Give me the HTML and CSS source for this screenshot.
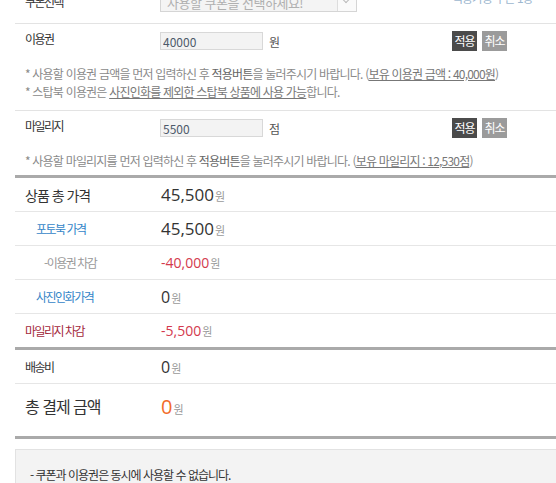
FILE: index.html
```html
<!DOCTYPE html>
<html lang="ko">
<head>
	<meta charset="UTF-8">
	<title>결제 정보</title>
	<link rel="stylesheet" href="styles.css">
</head>
<body>
	<div class="payBox">
		<!-- 쿠폰 -->
		<div class="useBlock">
			<div class="useRow">
				<span class="useTit">쿠폰선택</span>
				<div class="selectBox">
					<span>사용할 쿠폰을 선택하세요!</span>
					<i class="arrow"></i>
				</div>
				<a href="javascript:;" class="couponCnt">적용가능 쿠폰 1장</a>
			</div>
		</div>
		<!-- 이용권 -->
		<div class="useBlock">
			<div class="useRow">
				<span class="useTit">이용권</span>
				<div class="inputWrap"><input type="text" class="txt" value="40000" /><span class="unit">원</span></div>
				<div class="btns"><a href="javascript:;" class="btnApply">적용</a><a href="javascript:;" class="btnCancel">취소</a></div>
			</div>
			<p class="note first">* 사용할 이용권 금액을 먼저 입력하신 후 <b>적용버튼</b>을 눌러주시기 바랍니다. (<u>보유 이용권 금액 : 40,000원</u>)</p>
			<p class="note">* 스탑북 이용권은 <u>사진인화를 제외한 스탑북 상품에 사용 가능</u>합니다.</p>
		</div>
		<!-- 마일리지 -->
		<div class="useBlock last">
			<div class="useRow">
				<span class="useTit">마일리지</span>
				<div class="inputWrap"><input type="text" class="txt" value="5500" /><span class="unit">점</span></div>
				<div class="btns"><a href="javascript:;" class="btnApply">적용</a><a href="javascript:;" class="btnCancel">취소</a></div>
			</div>
			<p class="note first">* 사용할 마일리지를 먼저 입력하신 후 <b>적용버튼</b>을 눌러주시기 바랍니다. (<u>보유 마일리지 : 12,530점</u>)</p>
		</div>

		<!-- 금액 -->
		<div class="priceTable">
			<div class="priceRow">
				<span class="tit big">상품 총 가격</span>
				<span class="val"><em class="num">45,500</em>원</span>
			</div>
			<div class="priceRow">
				<span class="tit sub blue">포토북 가격</span>
				<span class="val"><em class="num">45,500</em>원</span>
			</div>
			<div class="priceRow">
				<span class="tit sub2 gray">-이용권 차감</span>
				<span class="val"><em class="num small red">-40,000</em>원</span>
			</div>
			<div class="priceRow">
				<span class="tit sub blue">사진인화가격</span>
				<span class="val"><em class="num mid">0</em>원</span>
			</div>
			<div class="priceRow line">
				<span class="tit darkred">마일리지 차감</span>
				<span class="val"><em class="num small red">-5,500</em>원</span>
			</div>
			<div class="priceRow">
				<span class="tit">배송비</span>
				<span class="val"><em class="num mid">0</em>원</span>
			</div>
			<div class="priceRow total">
				<span class="tit total">총 결제 금액</span>
				<span class="val"><em class="num orange">0</em>원</span>
			</div>
		</div>

		<div class="noticeBox">
			<p>- 쿠폰과 이용권은 동시에 사용할 수 없습니다.</p>
		</div>
	</div>
</body>
</html>
```

FILE: styles.css
```css
*{
	margin: 0;
	padding: 0;
}
html,body{
	overflow: hidden;
}
body{
	font-family: "Noto Sans CJK KR", sans-serif;
	font-size: 12px;
	color: #333;
	background: #fff;
}
a{
	text-decoration: none;
}
em{
	font-style: normal;
}
.payBox{
	width: 620px;
	margin: -13px 0 0 15px;
}
.useBlock{
	border-bottom: 1px solid #e3e3e3;
	padding-bottom: 9px;
}
.useBlock.last{
	border-bottom: none;
	padding-bottom: 5px;
}
.useRow{
	display: grid;
	grid-template-columns: 145px 292px 1fr;
	align-items: center;
	height: 20px;
	padding-top: 7px;
}
.useTit{
	padding-left: 10px;
	line-height: 20px;
	letter-spacing: -1.5px;
	margin-top: -5px;
}
.selectBox{
	display: flex;
	width: 197px;
	height: 20px;
	border: 1px solid #d5d5d5;
	background: #f4f4f4;
	color: #b0b0b0;
	font-size: 13px;
	line-height: 20px;
	box-sizing: border-box;
	margin-top: -4px;
}
.selectBox span{
	flex: 1;
	padding-left: 6px;
	letter-spacing: -0.5px;
}
.selectBox .arrow{
	position: relative;
	width: 18px;
	border-left: 1px solid #ddd;
	background: #fafafa;
}
.selectBox .arrow:after{
	content: "";
	position: absolute;
	left: 5px;
	top: 3px;
	width: 5px;
	height: 5px;
	border-right: 1px solid #bbb;
	border-bottom: 1px solid #bbb;
	transform: rotate(45deg);
}
.couponCnt{
	color: #9db7cf;
	letter-spacing: -1px;
	margin-top: -13px;
}
.inputWrap{
	display: flex;
	align-items: center;
}
.txt{
	width: 103px;
	height: 18px;
	border: 1px solid #d8d8d8;
	background: #f3f3f3;
	box-sizing: border-box;
	padding-left: 2px;
	font-family: "Noto Sans CJK KR", sans-serif;
	font-size: 12px;
	color: #4d5a6a;
	outline: none;
}
.unit{
	margin-left: 6px;
	color: #555;
}
.btns{
	display: flex;
	gap: 5px;
}
.btns a{
	width: 25px;
	height: 20px;
	line-height: 20px;
	text-align: center;
	color: #fff;
	letter-spacing: -1px;
}
.btnApply{
	background: #4b4b4b;
}
.btnCancel{
	background: #9b9b9b;
}
.note{
	padding-left: 10px;
	font-size: 12px;
	line-height: 18px;
	color: #8a8a8a;
	letter-spacing: -0.8px;
	white-space: nowrap;
}
.note.first{
	margin-top: 14px;
}
.note b{
	font-weight: normal;
	color: #666;
}
.note u{
	color: #777;
}

.priceTable{
	border-top: 3px solid #aaa;
	border-bottom: 3px solid #aaa;
}
.priceRow{
	display: grid;
	grid-template-columns: 146px 1fr;
	align-items: center;
	height: 33px;
	border-bottom: 1px solid #e6e6e6;
}
.priceRow.line{
	border-bottom: 3px solid #aaa;
}
.priceRow.total{
	height: 44px;
	border-bottom: none;
	padding-bottom: 8px;
}
.tit{
	padding-left: 10px;
	letter-spacing: -1.5px;
}
.tit.big{
	font-size: 14px;
	letter-spacing: -1px;
}
.tit.total{
	font-size: 16px;
	letter-spacing: -1px;
}
.tit.sub{
	padding-left: 21px;
}
.tit.sub2{
	padding-left: 29px;
}
.blue{
	color: #3486c8;
}
.gray{
	color: #999;
}
.darkred{
	color: #a3283c;
}
.val{
	color: #9a9a9a;
	font-size: 11px;
}
.num{
	font-family: "Open Sans", sans-serif;
	font-size: 17px;
	color: #333;
	margin-right: 1px;
}
.num.small{
	font-size: 14px;
}
.num.mid{
	font-size: 16px;
}
.red{
	color: #d3394d;
}
.num.orange{
	font-size: 20px;
	color: #f26b2a;
}

.noticeBox{
	margin-top: 10px;
	height: 60px;
	border: 1px solid #e2e2e2;
	background: #f3f3f3;
	padding: 16px 14px 0;
}
.noticeBox p{
	line-height: 18px;
	letter-spacing: -1px;
}
```
